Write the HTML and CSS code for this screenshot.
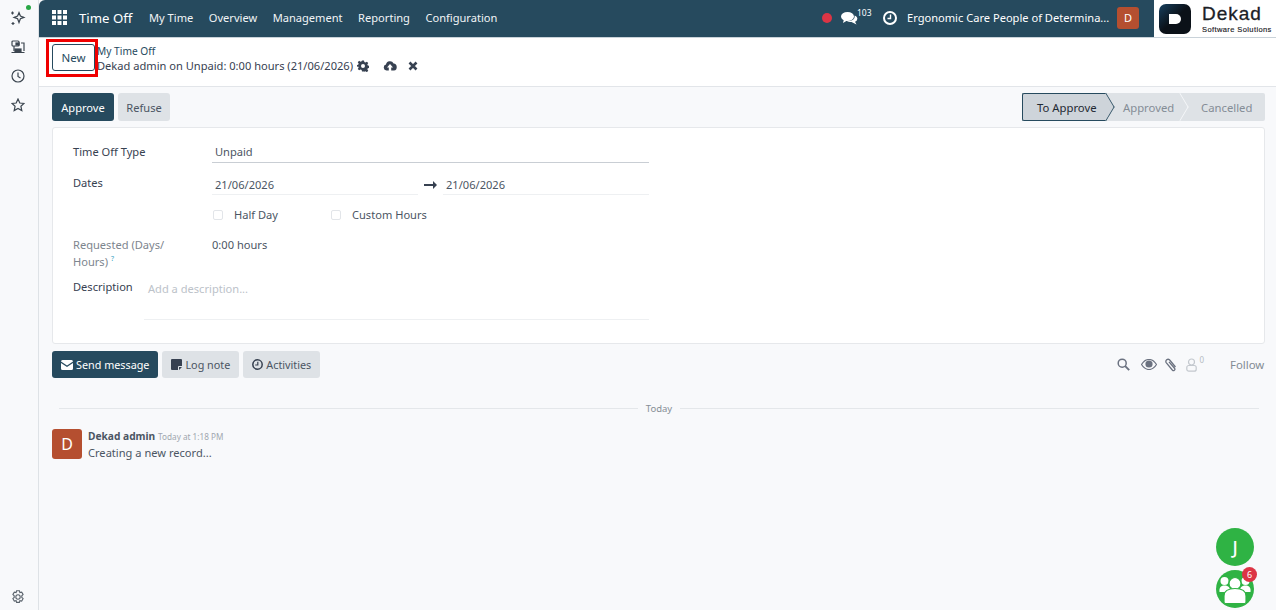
FILE: index.html
```html
<!DOCTYPE html>
<html>
    <head>
        <link rel="stylesheet" href="styles.css">
    </head>
    <body>
        <div class="container">
            <aside class="rail">
                <div class="rail-top">
                    <div class="rail-icon spark">
                        <svg width="16" height="16" viewBox="0 0 16 16" fill="none" stroke="#3c4650" stroke-width="1.2"><path d="M9 2.5 L10.4 6 L14 7.4 L10.4 8.8 L9 12.5 L7.6 8.8 L4 7.4 L7.6 6 Z"/><path d="M2.5 1.5v3M1 3h3M3 12v3M1.5 13.5h3"/></svg>
                        <span class="online"></span>
                    </div>
                    <div class="rail-icon">
                        <svg width="14" height="14" viewBox="0 0 14 14" fill="none" stroke="#3c4650" stroke-width="1.2"><rect x="1" y="1" width="7" height="5" rx="1"/><rect x="5" y="3" width="3" height="2" fill="#3c4650"/><path d="M10 3h3v8M3 6v5M0.5 12.5h13"/><rect x="4" y="9" width="6" height="3" fill="#3c4650"/></svg>
                    </div>
                    <div class="rail-icon">
                        <svg width="14" height="14" viewBox="0 0 14 14" fill="none" stroke="#3c4650" stroke-width="1.2"><circle cx="7" cy="7" r="6"/><path d="M7 3.5V7.5L9.5 9"/></svg>
                    </div>
                    <div class="rail-icon">
                        <svg width="14" height="14" viewBox="0 0 14 14" fill="none" stroke="#3c4650" stroke-width="1.2"><path d="M7 1 L8.8 5 L13 5.4 L9.9 8.2 L10.8 12.6 L7 10.4 L3.2 12.6 L4.1 8.2 L1 5.4 L5.2 5 Z"/></svg>
                    </div>
                </div>
                <div class="rail-icon">
                    <svg width="14" height="14" viewBox="0 0 14 14" fill="none" stroke="#5a636c" stroke-width="1.1"><path d="M5.600 .8h2.800l.5 1.800 1.800-.5 1.400 2.400-1.300 1.300v1.600l1.300 1.300-1.400 2.400-1.800-.5-.5 1.800H5.600l-.5-1.800-1.800.5-1.400-2.400 1.300-1.300V5.800L1.900 4.500l1.400-2.400 1.800.5z"/><circle cx="7" cy="7" r="2.200"/></svg>
                </div>
            </aside>
            <div class="main">
                <nav class="navbar">
                    <svg class="apps" width="15" height="15" viewBox="0 0 15 15" fill="#fff"><rect x="0" y="0" width="4" height="4"/><rect x="5.5" y="0" width="4" height="4"/><rect x="11" y="0" width="4" height="4"/><rect x="0" y="5.5" width="4" height="4"/><rect x="5.5" y="5.5" width="4" height="4"/><rect x="11" y="5.5" width="4" height="4"/><rect x="0" y="11" width="4" height="4"/><rect x="5.5" y="11" width="4" height="4"/><rect x="11" y="11" width="4" height="4"/></svg>
                    <span class="brand">Time Off</span>
                    <ul class="menu">
                        <li>My Time</li>
                        <li>Overview</li>
                        <li>Management</li>
                        <li>Reporting</li>
                        <li>Configuration</li>
                    </ul>
                    <div class="systray">
                        <span class="rec"></span>
                        <span class="chat">
                            <svg width="17" height="14" viewBox="0 0 17 14" fill="#fff"><ellipse cx="6.5" cy="5.5" rx="6.5" ry="4.5"/><path d="M3 8 L2 12 L7 9 Z"/><path d="M13.5 4.5 C16 5.5 17 7 16 9 C15.500 10 14.500 10.500 14 10.700 L15.500 13.500 L10.500 11 C8.500 11 7 10.600 6 10 C10 10.500 14.500 8.500 13.500 4.500 Z"/></svg>
                            <sup>103</sup>
                        </span>
                        <svg class="clock" width="14" height="14" viewBox="0 0 14 14" fill="none" stroke="#fff" stroke-width="2"><circle cx="7" cy="7" r="6"/><path d="M7.500 3.500V7.500H4.500" stroke-width="1.400"/></svg>
                        <span class="company">Ergonomic Care People of Determina...</span>
                        <span class="user-avatar">D</span>
                    </div>
                    <div class="logo">
                        <svg width="32" height="30" viewBox="0 0 32 30"><defs><linearGradient id="lg" x1="0" y1="0" x2="1" y2="1"><stop offset="0" stop-color="#17405f"/><stop offset=".5" stop-color="#0b1118"/><stop offset="1" stop-color="#0b1118"/></linearGradient></defs><rect width="32" height="30" rx="7" fill="url(#lg)"/><path d="M10 10h7a5 5 0 0 1 5 5a5 5 0 0 1-5 5h-7z" fill="#fff"/></svg>
                        <div class="logo-text">
                            <span class="logo-name">Dekad</span>
                            <span class="logo-sub">Software Solutions</span>
                        </div>
                    </div>
                </nav>
                <div class="control-panel">
                    <button class="btn-new">New</button>
                    <div class="crumbs">
                        <a class="crumb-top">My Time Off</a>
                        <div class="crumb-current">
                            <span class="crumb-name">Dekad admin on Unpaid: 0:00 hours (21/06/2026)</span>
                            <svg class="gear" width="12" height="12" viewBox="0 0 24 24" fill="#374151"><path fill-rule="evenodd" d="M10 1h4l.7 3.200 2.200.9 2.800-1.800 2.800 2.800-1.800 2.800.9 2.200 3.200.7v4l-3.200.7-.9 2.200 1.800 2.800-2.800 2.800-2.800-1.800-2.200.9L14 23h-4l-.7-3.200-2.200-.9-2.800 1.800-2.800-2.800 1.800-2.800-.9-2.200L-.8 14v-4l3.200-.7.9-2.200-1.800-2.800 2.800-2.800 2.800 1.800 2.200-.9zM12 8a4 4 0 1 0 0 8 4 4 0 0 0 0-8z"/></svg>
                            <svg class="cloud" width="14" height="11" viewBox="0 0 14 11" fill="#374151"><path d="M3.500 10.500A3 3 0 0 1 3 4.600 4 4 0 0 1 10.600 3.600 3.500 3.500 0 0 1 11 10.500H8.200V7.500H10L7 4 4 7.500H5.800V10.500Z"/></svg>
                            <svg class="discard" width="10" height="10" viewBox="0 0 10 10" stroke="#374151" stroke-width="2.600"><path d="M1.500 1.500l7 7M8.500 1.500l-7 7"/></svg>
                        </div>
                    </div>
                </div>
                <div class="content">
                    <div class="status-row">
                        <div class="actions">
                            <button class="btn btn-primary">Approve</button>
                            <button class="btn btn-light">Refuse</button>
                        </div>
                        <div class="statusbar">
                            <span class="step active">To Approve</span>
                            <span class="step second">Approved</span>
                            <span class="step last">Cancelled</span>
                        </div>
                    </div>
                    <div class="card">
                        <div class="form-grid">
                            <div class="label dark">Time Off Type</div>
                            <div class="field type-field">Unpaid</div>
                            <div class="label dark">Dates</div>
                            <div class="dates">
                                <div class="field thin">21/06/2026</div>
                                <svg width="13" height="8" viewBox="0 0 13 8" fill="#374151"><path d="M0 3h9V0l4 4-4 4V5H0z"/></svg>
                                <div class="field thin">21/06/2026</div>
                            </div>
                            <div></div>
                            <div class="checks">
                                <label class="check"><span class="box"></span>Half Day</label>
                                <label class="check"><span class="box"></span>Custom Hours</label>
                            </div>
                            <div class="label muted">Requested (Days/<br>Hours) <sup class="help">?</sup></div>
                            <div class="value">0:00 hours</div>
                        </div>
                        <div class="desc-row">
                            <div class="label dark">Description</div>
                            <div class="desc-field">Add a description...</div>
                        </div>
                    </div>
                    <div class="chatter-bar">
                        <button class="btn btn-primary icon-btn">
                            <svg width="12" height="10" viewBox="0 0 12 10" fill="#fff"><path d="M0 1.500A1.500 1.500 0 0 1 1.500 0h9A1.500 1.500 0 0 1 12 1.500L6 5.500 0 1.500z"/><path d="M0 3l6 4 6-4v5.500A1.500 1.500 0 0 1 10.500 10h-9A1.500 1.500 0 0 1 0 8.500z"/></svg>
                            Send message
                        </button>
                        <button class="btn btn-light icon-btn">
                            <svg width="11" height="11" viewBox="0 0 11 11" fill="#374151"><path d="M1 0h9a1 1 0 0 1 1 1v6H8a1 1 0 0 0-1 1v3H1a1 1 0 0 1-1-1V1a1 1 0 0 1 1-1zM8 8h3l-3 3z"/></svg>
                            Log note
                        </button>
                        <button class="btn btn-light icon-btn">
                            <svg width="11" height="11" viewBox="0 0 11 11" fill="none" stroke="#374151" stroke-width="1.500"><circle cx="5.500" cy="5.500" r="4.700"/><path d="M5.800 2.800V6H3.200" stroke-width="1.200"/></svg>
                            Activities
                        </button>
                        <div class="chatter-tools">
                            <svg width="13" height="13" viewBox="0 0 13 13" fill="none" stroke="#6b7280" stroke-width="1.500"><circle cx="5.200" cy="5.200" r="4"/><path d="M8.200 8.200l4 4" stroke-width="1.900"/></svg>
                            <svg class="eye" width="16" height="11" viewBox="0 0 16 11"><path d="M.5 5.500C3 1.500 5.500.5 8 .5s5 1 7.500 5c-2.500 4-5 5-7.500 5s-5-1-7.500-5z" fill="none" stroke="#6b7280" stroke-width="1.200"/><circle cx="8" cy="5" r="3.600" fill="#6b7280"/></svg>
                            <svg class="clip" width="13" height="14" viewBox="0 0 13 14" fill="none" stroke="#6b7280" stroke-width="1.300"><path d="M11.500 9 5.500 1.800a2.200 2.200 0 0 0-3.300 2.800l6.300 7.600a1.400 1.400 0 0 0 2.200-1.700L5 3.900"/></svg>
                            <span class="followers">
                                <svg width="11" height="14" viewBox="0 0 11 14" fill="none" stroke="#c3c8ce" stroke-width="1.200"><circle cx="5.500" cy="4" r="3"/><rect x=".8" y="7.500" width="9.400" height="5.700" rx="2"/></svg>
                                <sup>0</sup>
                            </span>
                            <span class="follow">Follow</span>
                        </div>
                    </div>
                    <div class="divider"><span>Today</span></div>
                    <div class="message">
                        <div class="msg-avatar">D</div>
                        <div class="msg-body">
                            <div class="msg-head"><b>Dekad admin</b> <small>Today at 1:18 PM</small></div>
                            <div class="msg-text">Creating a new record...</div>
                        </div>
                    </div>
                </div>
            </div>
            <div class="red-mark"></div>
            <div class="float-j">J</div>
            <div class="float-team">
                <svg width="38" height="38" viewBox="0 0 38 38" fill="#fff"><circle cx="8.500" cy="11" r="4"/><circle cx="29.500" cy="11" r="4"/><path d="M3.500 22c-.5-4 1-6.500 5-6.500s6 2.500 6 6.500z"/><path d="M34.500 22c.5-4-1-6.500-5-6.500s-6 2.500-6 6.500z"/><g stroke="#2fb344" stroke-width="1.200"><circle cx="19" cy="13.500" r="6"/><path d="M8 32v-6c0-5 4-7.500 11-7.500s11 2.500 11 7.500v6a1.500 1.500 0 0 1-1.500 1.500h-19A1.500 1.500 0 0 1 8 32z"/></g></svg>
                <span class="badge">6</span>
            </div>
        </div>
    </body>
</html>
```

FILE: styles.css
```css
*, *:after, *:before {
    box-sizing: border-box;
    margin: 0;
    padding: 0;
}
html, body {
    width: 100%;
    height: 100%;
    overflow: hidden;
}
body {
    font-family: "Noto Sans", "Open Sans", sans-serif;
    font-size: 11.1px;
    color: #374151;
    background: #f8f9fb;
}
.container {
    display: flex;
    height: 610px;
}
button {
    font-family: inherit;
    border: none;
}

/* left rail */
.rail {
    width: 39px;
    flex-shrink: 0;
    background: #f8f9fb;
    border-right: 1px solid #dee2e6;
    display: flex;
    flex-direction: column;
    justify-content: space-between;
    align-items: center;
    padding: 9px 3px 4px 0;
}
.rail-top {
    display: flex;
    flex-direction: column;
    gap: 11px;
    align-items: center;
}
.rail-icon {
    position: relative;
    display: flex;
    justify-content: center;
    height: 18px;
    align-items: center;
}
.online {
    position: absolute;
    top: -4px;
    right: -5px;
    width: 5px;
    height: 5px;
    border-radius: 50%;
    background: #28a745;
}

/* top bar */
.main {
    flex: 1;
    min-width: 0;
    display: flex;
    flex-direction: column;
}
.navbar {
    height: 38px;
    background: #264a5e;
    border-bottom: 1px solid #c9d2d9;
    border-radius: 6px 0 0 0;
    display: flex;
    align-items: center;
    color: #fff;
    padding: 0 0 2px 13px;
}
.apps {
    margin-right: 12px;
}
.brand {
    font-size: 13.200px;
    width: 70px;
}
.menu {
    display: flex;
    list-style: none;
    gap: 15.500px;
    color: #f1f4f6;
}
.systray {
    margin-left: auto;
    display: flex;
    align-items: center;
}
.rec {
    width: 10px;
    height: 10px;
    border-radius: 50%;
    background: #dc3545;
    margin-right: 9px;
}
.chat {
    display: flex;
    align-items: flex-start;
    width: 31px;
    margin-right: 11px;
}
.chat sup {
    font-size: 8.500px;
    line-height: 9px;
    margin-top: -3px;
    margin-left: -1px;
}
.clock {
    margin-right: 10px;
}
.company {
    width: 210px;
    white-space: nowrap;
}
.user-avatar {
    width: 22px;
    height: 22px;
    border-radius: 3px;
    background: #b54f30;
    display: flex;
    align-items: center;
    justify-content: center;
    font-size: 11px;
}
.logo {
    align-self: flex-start;
    width: 122px;
    height: 37px;
    margin-left: 15px;
    background: #fff;
    display: flex;
    align-items: center;
    gap: 11px;
    padding-left: 5px;
    color: #1b2026;
}
.logo-text {
    display: flex;
    flex-direction: column;
    font-family: "Liberation Sans", sans-serif;
}
.logo-name {
    font-size: 19px;
    line-height: 22px;
    letter-spacing: 1px;
    -webkit-text-stroke: .3px #1b2026;
}
.logo-sub {
    font-size: 7.500px;
    line-height: 9px;
    letter-spacing: .4px;
    white-space: nowrap;
    -webkit-text-stroke: .15px #1b2026;
}

/* control panel */
.control-panel {
    height: 49px;
    background: #fff;
    border-bottom: 1px solid #e2e5e9;
    display: flex;
    padding: 6px 0 0 13px;
}
.btn-new {
    width: 43px;
    height: 27px;
    background: #fff;
    border: 1px solid #264a5e;
    border-radius: 3px;
    color: #264a5e;
    font-size: 11.500px;
    margin-right: 2px;
}
.crumb-top {
    display: block;
    font-size: 10.200px;
    line-height: 14px;
    color: #264a5e;
}
.crumb-current {
    display: flex;
    align-items: center;
    line-height: 15px;
}
.crumb-name {
    width: 255px;
    white-space: nowrap;
}
.gear {
    margin-left: 5px;
}
.cloud {
    margin-left: 14px;
}
.discard {
    margin-left: 11px;
}

/* page content */
.content {
    padding: 6px 11px 0 13px;
}
.status-row {
    display: flex;
    justify-content: space-between;
    height: 28px;
}
.actions {
    display: flex;
    gap: 4px;
}
.actions .btn {
    height: 28px;
    width: 62px;
    padding: 0;
}
.actions .btn-light {
    width: 52px;
}
.btn {
    height: 27px;
    border-radius: 3px;
    font-size: 11.100px;
    padding: 0 9px;
}
.btn-primary {
    background: #264a5e;
    color: #fff;
}
.btn-light {
    background: #dee2e6;
    color: #4b5563;
}
.statusbar {
    display: flex;
    width: 243px;
    height: 28px;
    background: #dee2e6;
    border-radius: 0 2px 2px 0;
    font-size: 11.300px;
}
.step {
    position: relative;
    display: flex;
    align-items: center;
    color: #858d96;
}
.step.active {
    width: 84px;
    background: #ced4da;
    border: 1px solid #264a5e;
    border-right: none;
    border-radius: 2px 0 0 2px;
    color: #1f2933;
    padding-left: 14px;
}
.step.active:after {
    content: "";
    position: absolute;
    right: -10px;
    top: 3px;
    width: 20px;
    height: 20px;
    background: #ced4da;
    border-top: 1px solid #264a5e;
    border-right: 1px solid #264a5e;
    transform: scaleX(.6) rotate(45deg);
}
.step.second {
    width: 78px;
    padding-left: 17px;
}
.step.second:after {
    content: "";
    position: absolute;
    right: -6px;
    top: 4px;
    width: 20px;
    height: 20px;
    border-top: 1px solid #f8f9fb;
    border-right: 1px solid #f8f9fb;
    transform: scaleX(.6) rotate(45deg);
}
.step.last {
    padding-left: 17px;
}

/* form */
.card {
    margin-top: 6px;
    height: 217px;
    background: #fff;
    border: 1px solid #e6e8eb;
    border-radius: 3px;
    padding: 15px 20px 0 20px;
}
.form-grid {
    display: grid;
    grid-template-columns: 139px 437px;
    width: 576px;
}
.label {
    line-height: 17px;
}
.dark {
    color: #374151;
}
.muted {
    color: #7d858e;
    width: 110px;
    margin-top: 13px;
}
.help {
    font-size: 7px;
    color: #3aa6c2;
    line-height: 0;
}
.field {
    line-height: 17px;
    padding: 0 0 2px 3px;
    color: #4b5563;
}
.type-field {
    border-bottom: 1px solid #c9ced4;
    margin-bottom: 11px;
}
.field.thin {
    flex: 1;
    border-bottom: 1px solid #eef0f2;
    padding: 2px 0 1px 3px;
}
.dates {
    display: flex;
    align-items: center;
    gap: 6px;
    height: 21px;
}
.checks {
    display: flex;
    margin: 11px 0 0 1px;
    height: 17px;
}
.check {
    display: flex;
    align-items: center;
    width: 118px;
    color: #4b5563;
}
.box {
    width: 10px;
    height: 10px;
    border: 1px solid #e2e5e9;
    border-radius: 2px;
    margin-right: 11px;
}
.value {
    line-height: 17px;
    margin-top: 13px;
    color: #4b5563;
}
.desc-row {
    display: flex;
    margin-top: 8px;
}
.desc-row .label {
    width: 71px;
    flex-shrink: 0;
}
.desc-field {
    width: 505px;
    height: 42px;
    border-bottom: 1px solid #eef0f2;
    color: #bcc2c9;
    padding: 2px 0 0 4px;
    line-height: 17px;
}

/* chatter */
.chatter-bar {
    display: flex;
    gap: 4px;
    margin-top: 7px;
    align-items: center;
}
.icon-btn {
    display: flex;
    align-items: center;
    gap: 3px;
    font-size: 10.800px;
}
.chatter-tools {
    margin-left: auto;
    display: flex;
    align-items: center;
    color: #6b7280;
}
.eye {
    margin-left: 11px;
}
.clip {
    margin-left: 7px;
}
.followers {
    display: flex;
    align-items: flex-start;
    margin-left: 9px;
    color: #b6bcc3;
}
.followers sup {
    font-size: 8px;
    line-height: 8px;
    margin-left: 2px;
    margin-top: -2px;
}
.follow {
    margin-left: 26px;
    width: 35px;
    color: #838b94;
    font-size: 11.400px;
}
.divider {
    display: flex;
    align-items: center;
    gap: 8px;
    margin: 23px 6px 0 7px;
    height: 14px;
    font-size: 9.500px;
    color: #868e96;
}
.divider:before, .divider:after {
    content: "";
    flex: 1;
    border-top: 1px solid #e4e7ea;
}
.message {
    display: flex;
    gap: 6px;
    margin-top: 14px;
}
.msg-avatar {
    width: 30px;
    height: 30px;
    border-radius: 3px;
    background: #b54f30;
    color: #fff;
    font-size: 16px;
    display: flex;
    align-items: center;
    justify-content: center;
}
.msg-head {
    line-height: 14px;
}
.msg-head b {
    font-size: 10.200px;
    color: #4b5563;
}
.msg-head small {
    font-size: 8.200px;
    color: #a0a7af;
}
.msg-text {
    line-height: 17px;
    color: #4b5563;
}

/* things lying over the page */
.red-mark {
    position: absolute;
    left: 46px;
    top: 39px;
    width: 52px;
    height: 38px;
    border: 3px solid #f00000;
}
.float-j, .float-team {
    position: absolute;
    left: 1216px;
    width: 38px;
    height: 38px;
    border-radius: 50%;
    background: #2fb344;
    color: #fff;
}
.float-j {
    top: 528px;
    display: flex;
    align-items: center;
    justify-content: center;
    font-size: 18px;
    font-weight: 500;
}
.float-team {
    top: 570px;
}
.badge {
    position: absolute;
    right: -3px;
    top: -3px;
    width: 15px;
    height: 15px;
    border-radius: 50%;
    background: #dc3545;
    font-size: 9px;
    display: flex;
    align-items: center;
    justify-content: center;
}
```
